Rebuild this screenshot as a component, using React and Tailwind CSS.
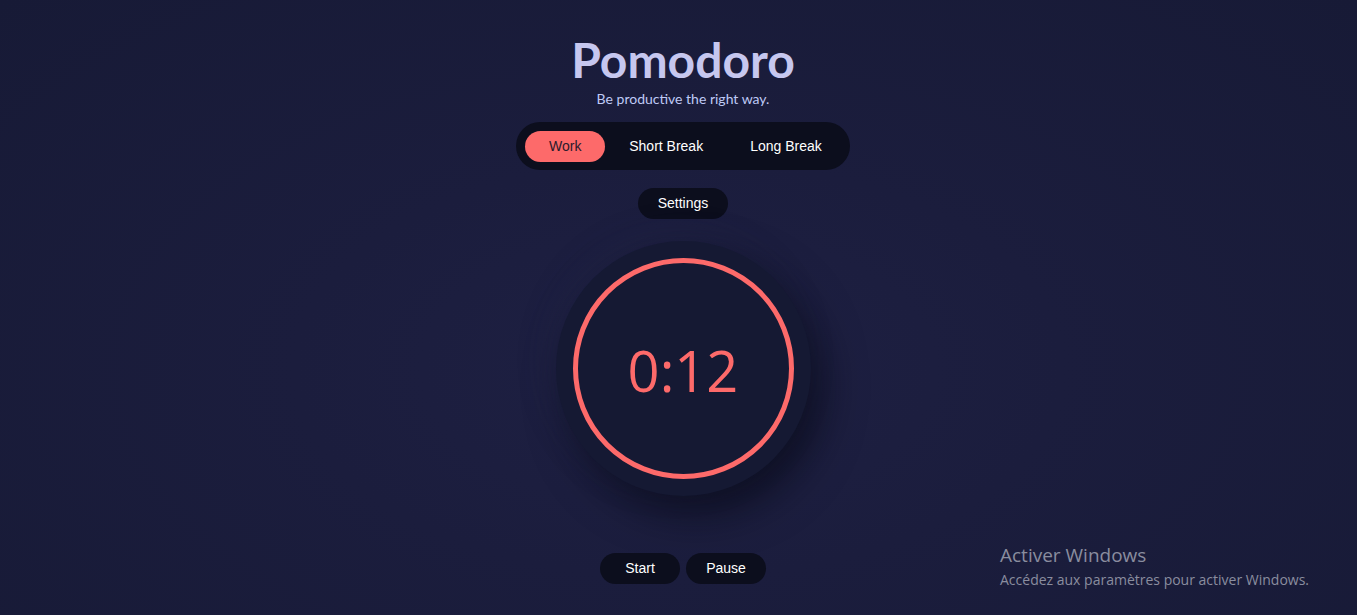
import { useState } from 'react'

const modes = ['Work', 'Short Break', 'Long Break']

const App = () => {
  const [mode, setMode] = useState('Work')

  return (
    <div
      className="relative w-full h-[615px] overflow-hidden flex flex-col items-center pl-[9px] bg-[radial-gradient(ellipse_at_50%_60%,#1e2043_0%,#1b1d3d_40%,#171a36_100%)]"
      style={{ fontFamily: '"Liberation Sans", Arial, sans-serif' }}
    >
      {/* Header */}
      <h1 className="mt-[36px] h-[48px] leading-none text-[48px] font-bold text-[#c6c7ef] font-['Lato',sans-serif]">
        Pomodoro
      </h1>
      <p className="mt-[6px] h-[18px] leading-[18px] text-[14px] text-[#bfcaf6] font-['Lato',sans-serif]">
        Be productive the right way.
      </p>

      {/* Mode tabs */}
      <div className="mt-[14px] h-[48px] flex items-center gap-[1px] pl-[9px] pr-[5px] rounded-full bg-[#0c0e1d]">
        {modes.map(m => (
          <button
            key={m}
            onClick={() => setMode(m)}
            className={`h-[31px] rounded-full text-[14px] ${
              mode === m ? 'w-20 bg-[#fd6a6a] text-[#2b1a2c]' : 'px-[23px] text-white'
            }`}
          >
            {m}
          </button>
        ))}
      </div>

      <button className="mt-[18px] h-[31px] px-5 rounded-full bg-[#0c0e1d] text-white text-[14px]">
        Settings
      </button>

      {/* Timer */}
      <div className="mt-[22px] w-[255px] h-[255px] rounded-full bg-[#151933] flex items-center justify-center shadow-[12px_18px_40px_rgba(5,6,16,0.6),-8px_-8px_30px_rgba(40,44,80,0.25)]">
        <div className="w-[221px] h-[221px] rounded-full border-[5px] border-[#fd6a6a] flex items-center justify-center">
          <span className="text-[56px] leading-none text-[#fd6a6a] font-['Open_Sans',sans-serif] mt-[2px]">
            0:12
          </span>
        </div>
      </div>

      {/* Controls */}
      <div className="mt-[57px] flex gap-[6px]">
        <button className="w-20 h-[31px] rounded-full bg-[#0c0e1d] text-white text-[14px]">Start</button>
        <button className="w-20 h-[31px] rounded-full bg-[#0c0e1d] text-white text-[14px]">Pause</button>
      </div>

      {/* Windows watermark */}
      <div className="absolute left-[1000px] top-[543px] text-[#8a8d9f] font-['Open_Sans',sans-serif]">
        <div className="text-[19px] leading-[24px]">Activer Windows</div>
        <div className="text-[14px] leading-[20px] mt-[3px]">Accédez aux paramètres pour activer Windows.</div>
      </div>
    </div>
  )
}

export default App
